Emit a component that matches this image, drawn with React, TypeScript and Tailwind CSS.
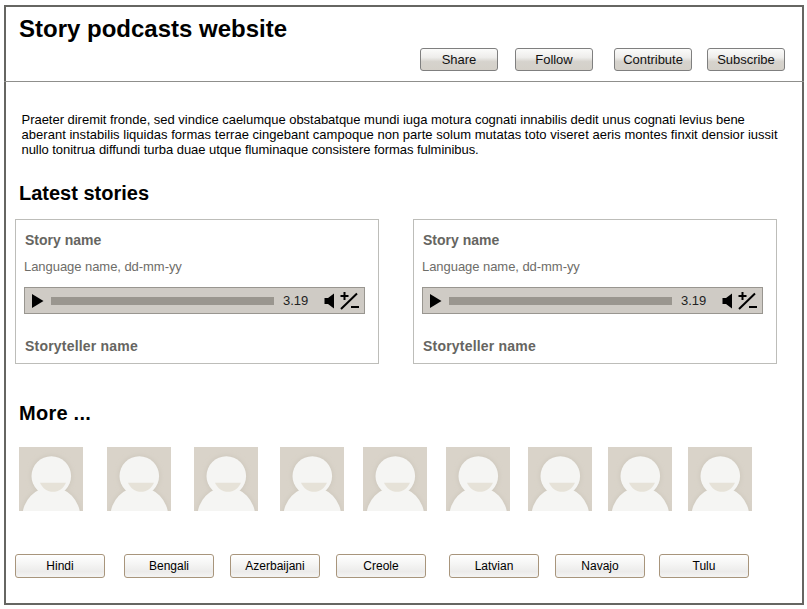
const FONT = "[font-family:'Liberation_Sans',Arial,sans-serif]";

function TopButton({ label, className }: { label: string; className: string }) {
  return (
    <button className={`h-[23px] w-[78px] rounded-[3px] border border-[#7f7f7f] bg-[linear-gradient(#fbfbfa_0%,#eeedeb_40%,#d6d3cd_60%,#d4d0c9_100%)] text-[13px] tracking-[-0.03px] text-[#111] ${className}`}>
      {label}
    </button>
  );
}

function LangButton({ label, className }: { label: string; className: string }) {
  return (
    <button className={`h-[24px] w-[90px] rounded-[3px] border border-[#a8957c] bg-[linear-gradient(#ffffff_0%,#f4f4f3_45%,#ecebea_75%,#f4f4f3_100%)] text-[12px] text-black ${className}`}>
      {label}
    </button>
  );
}

function Player() {
  return (
    <div className="mt-[12px] ml-[8px] flex h-[27px] w-[341px] items-center border border-[#999690] bg-[#cfcbc5]">
      <svg width="14" height="16" viewBox="0 0 14 16" className="ml-[6px]">
        <path d="M1 1 L12.5 8 L1 15 Z" fill="#000" />
      </svg>
      <div className="ml-[6px] h-[8px] w-[223px] bg-[#9a968f]" />
      <span className="ml-[9px] w-[25px] text-[13px] leading-[14px] text-[#222]">3.19</span>
      <svg width="11" height="16" viewBox="0 0 11 16" className="ml-[16px]">
        <path d="M0.5 5 H4 L10 0.5 V15.5 L4 11 H0.5 Z" fill="#000" />
      </svg>
      <svg width="20" height="20" viewBox="0 0 20 20" className="ml-[5px]">
        <path d="M4.5 1 V9 M0.5 5 H8.5 M1 18 L17 2.5 M11 16 H19" stroke="#000" strokeWidth="2" fill="none" />
      </svg>
    </div>
  );
}

function Card({ className }: { className: string }) {
  return (
    <div className={`h-[145px] w-[364px] border border-[#bdbdb9] ${className}`}>
      <div className="mt-[12px] ml-[9px] text-[14px] leading-[16px] font-bold text-[#666561]">Story name</div>
      <div className="mt-[11px] ml-[8px] text-[13px] leading-[16px] -tracking-[0.05px] text-[#6e6d69]">Language name, dd-mm-yy</div>
      <Player />
      <div className="mt-[24px] ml-[9px] text-[14px] leading-[16px] font-bold tracking-[0.2px] text-[#666561]">Storyteller name</div>
    </div>
  );
}

function Avatar({ className }: { className: string }) {
  return (
    <svg width="64" height="64" viewBox="0 0 64 64" className={`shrink-0 ${className}`}>
      <defs>
        <filter id="soft" x="-30%" y="-30%" width="160%" height="160%">
          <feGaussianBlur stdDeviation="2" />
        </filter>
      </defs>
      <rect width="64" height="64" fill="#d9d3c9" />
      <ellipse cx="32.3" cy="70" rx="30" ry="31" fill="#cfc9be" filter="url(#soft)" />
      <circle cx="32.3" cy="29" r="21" fill="#cfc9be" filter="url(#soft)" />
      <ellipse cx="32.3" cy="70" rx="29" ry="30" fill="#f5f5f3" />
      <circle cx="32.3" cy="29" r="19.8" fill="#f5f5f3" />
      <path d="M21 35.7 H47 C44.5 41.5 39.5 44.8 34 44.8 C28.5 44.8 23.5 41.5 21 35.7 Z" fill="#e6e2d8" />
    </svg>
  );
}

export default function App() {
  const avatars = ["ml-[13px]", "ml-[24px]", "ml-[23px]", "ml-[22px]", "ml-[19px]", "ml-[19px]", "ml-[18px]", "ml-[16px]", "ml-[16px]"];
  return (
    <div className={`h-[609px] w-[807px] bg-white pt-[5px] pl-[4px] ${FONT}`}>
      <div className="h-[600px] w-[800px] border-2 border-[#666662]">
        <header className="-mx-[2px] h-[75px] border-b border-[#8f8f8c]">
          <h1 className="pt-[8px] pl-[15px] text-[24px] leading-[28px] font-bold text-black">Story podcasts website</h1>
          <div className="mt-[5px] flex">
            <TopButton label="Share" className="ml-[416px]" />
            <TopButton label="Follow" className="ml-[17px]" />
            <TopButton label="Contribute" className="ml-[21px]" />
            <TopButton label="Subscribe" className="ml-[15px]" />
          </div>
        </header>

        <p className="mt-[30px] ml-[15.5px] text-[13px] leading-[15px] whitespace-nowrap text-black">
          <span className="block -tracking-[0.024px]">Praeter diremit fronde, sed vindice caelumque obstabatque mundi iuga motura cognati innabilis dedit unus cognati levius bene</span>
          <span className="block tracking-[0.03px]">aberant instabilis liquidas formas terrae cingebant campoque non parte solum mutatas toto viseret aeris montes finxit densior iussit</span>
          <span className="block -tracking-[0.045px]">nullo tonitrua diffundi turba duae utque fluminaque consistere formas fulminibus.</span>
        </p>

        <h2 className="mt-[24px] ml-[13px] text-[20px] leading-[24px] font-bold text-black">Latest stories</h2>
        <div className="mt-[14px] flex">
          <Card className="ml-[9px]" />
          <Card className="ml-[34px]" />
        </div>

        <h2 className="mt-[37px] ml-[13px] text-[20px] leading-[24px] font-bold tracking-[0.25px] text-black">More ...</h2>
        <div className="mt-[22px] flex">
          {avatars.map((c, i) => (
            <Avatar key={i} className={c} />
          ))}
        </div>

        <div className="mt-[43px] flex">
          <LangButton label="Hindi" className="ml-[9px]" />
          <LangButton label="Bengali" className="ml-[19px]" />
          <LangButton label="Azerbaijani" className="ml-[16px]" />
          <LangButton label="Creole" className="ml-[16px]" />
          <LangButton label="Latvian" className="ml-[23px]" />
          <LangButton label="Navajo" className="ml-[16px]" />
          <LangButton label="Tulu" className="ml-[14px]" />
        </div>
      </div>
    </div>
  );
}
